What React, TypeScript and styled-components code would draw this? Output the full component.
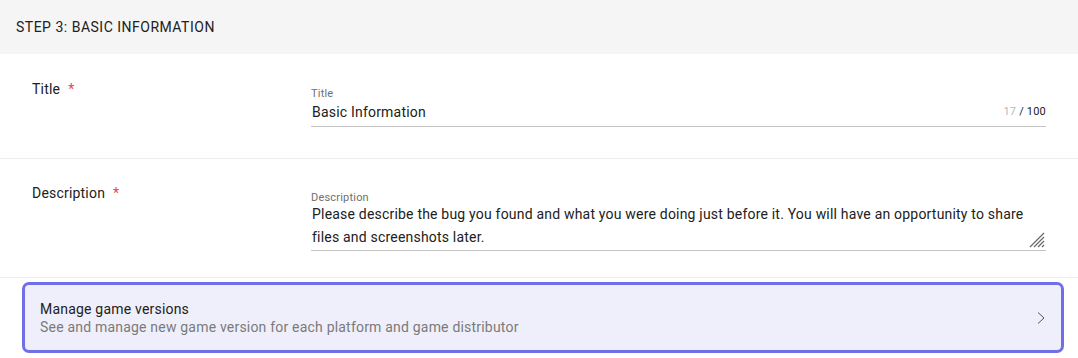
import React from 'react'
import styled, { createGlobalStyle } from 'styled-components'

const GlobalStyle = createGlobalStyle`
  body {
    margin: 0;
    background: #ffffff;
    font-family: Roboto, 'Noto Sans', sans-serif;
    letter-spacing: 0.2px;
    color: #212121;
  }
`

const Page = styled.div`
  width: 1078px;
  display: flex;
  flex-direction: column;
`

const StepHeader = styled.div`
  height: 54px;
  background: #f5f5f5;
  display: flex;
  align-items: center;
  padding: 0 16px;
  font-size: 14px;
  letter-spacing: 0.5px;
`

const FieldRow = styled.div<{ $top: number; $bottom: number }>`
  display: grid;
  grid-template-columns: 279px 1fr;
  padding: ${({ $top }) => $top}px 32px ${({ $bottom }) => $bottom}px 32px;
  border-bottom: 1px solid #ececec;
`

const FieldLabel = styled.div`
  font-size: 14px;
  line-height: 20px;
  span {
    color: #e5484d;
    margin-left: 8px;
  }
`

const InputBox = styled.div`
  padding-top: 8px;
  border-bottom: 1px solid #c4c4c4;
  position: relative;
`

const SmallLabel = styled.div`
  font-size: 11px;
  line-height: 14px;
  color: #6f6f6f;
`

const ValueLine = styled.div`
  display: flex;
  justify-content: space-between;
  align-items: center;
  font-size: 14px;
  line-height: 20px;
  padding: 1px 0 4px 1px;
`

const Counter = styled.span`
  font-size: 11px;
  color: #212121;
  em {
    font-style: normal;
    color: #b8b8b8;
    margin-right: 3px;
  }
`

const AreaText = styled.div`
  margin-top: -2px;
  font-size: 14px;
  line-height: 23px;
  padding: 0 0 1px 1px;
  white-space: pre-line;
`

const ResizeGrip = styled.svg`
  position: absolute;
  right: 1px;
  bottom: 2px;
`

const CardWrap = styled.div`
  padding: 4px 14px 5px 22px;
`

const ManageCard = styled.div`
  box-sizing: border-box;
  height: 71px;
  border: 3px solid #6f6fe8;
  border-radius: 7px;
  background: #efeffb;
  display: flex;
  align-items: center;
  justify-content: space-between;
  padding: 0 15px;
`

const CardText = styled.div`
  display: flex;
  flex-direction: column;
  font-size: 14px;
  line-height: 18px;
  p {
    margin: 0;
  }
  p:last-of-type {
    color: #7a7a7a;
  }
`

const App: React.FC = () => {
  return (
    <Page>
      <GlobalStyle />
      <StepHeader>STEP 3: BASIC INFORMATION</StepHeader>
      <FieldRow $top={25} $bottom={31}>
        <FieldLabel>
          Title<span>*</span>
        </FieldLabel>
        <InputBox>
          <SmallLabel>Title</SmallLabel>
          <ValueLine>
            <span>Basic Information</span>
            <Counter>
              <em>17</em>/ 100
            </Counter>
          </ValueLine>
        </InputBox>
      </FieldRow>
      <FieldRow $top={24} $bottom={26}>
        <FieldLabel>
          Description<span>*</span>
        </FieldLabel>
        <InputBox>
          <SmallLabel>Description</SmallLabel>
          <AreaText>
            {'Please describe the bug you found and what you were doing just before it. You will have an opportunity to share\nfiles and screenshots later.'}
          </AreaText>
          <ResizeGrip width="16" height="16" viewBox="0 0 16 16">
            <g stroke="#6a6a6a" strokeWidth="1.2">
              <line x1="15" y1="1" x2="1" y2="15" />
              <line x1="15" y1="5" x2="5" y2="15" />
              <line x1="15" y1="9" x2="9" y2="15" />
              <line x1="15" y1="13" x2="13" y2="15" />
            </g>
          </ResizeGrip>
        </InputBox>
      </FieldRow>
      <CardWrap>
        <ManageCard>
          <CardText>
            <p>Manage game versions</p>
            <p>See and manage new game version for each platform and game distributor</p>
          </CardText>
          <svg width="10" height="14" viewBox="0 0 10 14">
            <path d="M2 1.5 L8 7 L2 12.5" fill="none" stroke="#555" strokeWidth="1" />
          </svg>
        </ManageCard>
      </CardWrap>
    </Page>
  )
}

export default App
